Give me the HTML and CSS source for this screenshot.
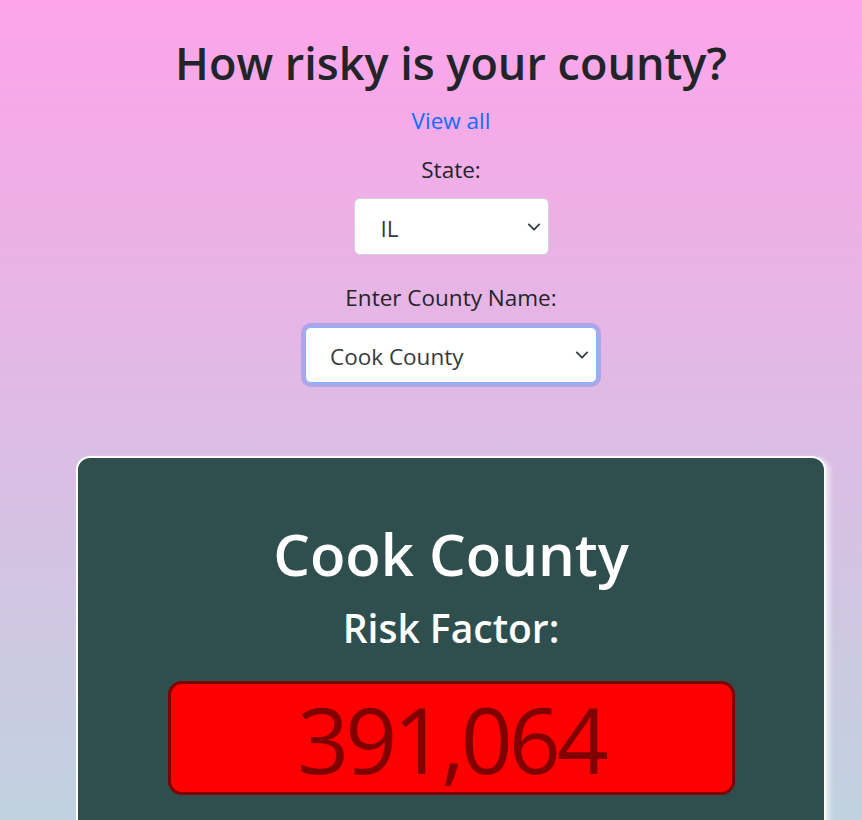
FILE: index.html
```html
<!DOCTYPE html>
<html lang="en">
<head>
<meta charset="utf-8">
<title>How risky is your county?</title>
<link rel="stylesheet" href="styles.css">
</head>
<body>
<main class="page">
  <h1 class="title">How risky is your county?</h1>
  <a class="view-all" href="#">View all</a>
  <label class="field-label" for="state">State:</label>
  <select id="state" class="select select-state">
    <option>IL</option>
  </select>
  <label class="field-label label-county" for="county">Enter County Name:</label>
  <select id="county" class="select select-county">
    <option>Cook County</option>
  </select>
  <section class="card">
    <h2 class="county-name">Cook County</h2>
    <h3 class="risk-label">Risk Factor:</h3>
    <div class="risk-box">391,064</div>
  </section>
</main>
</body>
</html>
```

FILE: styles.css
```css
* { box-sizing: border-box; }
html, body { margin: 0; padding: 0; }
body {
  height: 820px;
  background: linear-gradient(180deg, #fda4e9 0px, #c0d2e0 820px);
  font-family: "Open Sans", "Noto Sans", sans-serif;
  color: #212529;
  overflow: hidden;
}
.page {
  display: flex;
  flex-direction: column;
  align-items: center;
  padding: 35px 0 0 40px;
}
.title {
  margin: 0;
  font-size: 45px;
  line-height: 56px;
  font-weight: 600;
  letter-spacing: 0;
  color: #212529;
}
.view-all {
  margin-top: 14px;
  font-size: 22.5px;
  line-height: 32px;
  color: #0d6efd;
  text-decoration: none;
}
.field-label {
  margin-top: 17px;
  font-size: 22.5px;
  line-height: 32px;
}
.label-county { margin-top: 27px; }
.select {
  appearance: none;
  -webkit-appearance: none;
  margin-top: 12px;
  font-family: inherit;
  font-size: 22.5px;
  color: #343a40;
  background-color: #fff;
  background-image: url("data:image/svg+xml,%3csvg xmlns='http://www.w3.org/2000/svg' viewBox='0 0 16 16'%3e%3cpath fill='none' stroke='%23343a40' stroke-linecap='round' stroke-linejoin='round' stroke-width='2' d='m2 5 6 6 6-6'/%3e%3c/svg%3e");
  background-repeat: no-repeat;
  background-size: 18px 14px;
  border: 1px solid #ced4da;
  border-radius: 6px;
  outline: none;
}
.select-state {
  width: 195px;
  height: 57px;
  padding: 3px 40px 0 26px;
  background-position: right 5px center;
}
.select-county {
  width: 292px;
  height: 56px;
  margin-top: 13px;
  padding: 3px 40px 0 24px;
  background-position: right 5px center;
  border-color: #86b7fe;
  box-shadow: 0 0 0 4px rgba(13, 110, 253, 0.25);
}
.card {
  margin-top: 73px;
  width: 750px;
  height: 420px;
  padding-top: 63px;
  background: #2f4f4f;
  border: 2px solid #fff;
  border-radius: 14px;
  box-shadow: 4px 2px 5px rgba(255, 255, 255, 0.6);
  display: flex;
  flex-direction: column;
  align-items: center;
  color: #fff;
}
.county-name {
  margin: 0;
  font-size: 58px;
  line-height: 66px;
  font-weight: 600;
}
.risk-label {
  margin: 18px 0 0;
  font-size: 39px;
  line-height: 46px;
  font-weight: 600;
}
.risk-box {
  margin-top: 30px;
  width: 567px;
  height: 114px;
  padding-top: 3px;
  background: #ff0000;
  border: 3px solid #800000;
  border-radius: 14px;
  color: #800000;
  font-size: 91px;
  line-height: 105px;
  letter-spacing: -4px;
  text-align: center;
}
```
